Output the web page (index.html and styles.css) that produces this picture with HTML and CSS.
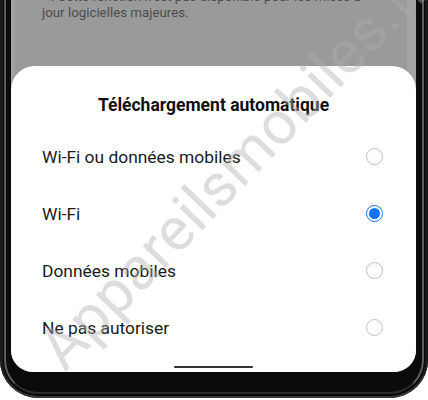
FILE: index.html
```html
<!DOCTYPE html>
<html lang="fr">
<head>
<meta charset="utf-8">
<link rel="stylesheet" href="styles.css">
</head>
<body>
<div class="phone">
  <div class="frame">
    <div class="screen">
      <div class="note">
        <p>* : Cette fonction n'est pas disponible pour les mises à</p>
        <p>jour logicielles majeures.</p>
      </div>
      <div class="sheet">
        <h1 class="title">Téléchargement automatique</h1>
        <ul class="options">
          <li class="option"><span>Wi-Fi ou données mobiles</span><span class="radio"></span></li>
          <li class="option"><span>Wi-Fi</span><span class="radio checked"></span></li>
          <li class="option"><span>Données mobiles</span><span class="radio"></span></li>
          <li class="option"><span>Ne pas autoriser</span><span class="radio"></span></li>
        </ul>
        <div class="home-bar"></div>
      </div>
    </div>
  </div>
  <div class="watermark">Appareilsmobiles.fr</div>
</div>
</body>
</html>
```

FILE: styles.css
```css
html, body {
  margin: 0;
  padding: 0;
  background: #ffffff;
}

body {
  width: 428px;
  height: 400px;
  overflow: hidden;
  font-family: Roboto, "Noto Sans", sans-serif;
}

.phone {
  position: relative;
  width: 428px;
  height: 398px;
  background: #050505;
  border-radius: 0 0 38px 38px;
  box-shadow: inset 0 -2px 0 #3a3a3a, inset 3px 0 0 #1a1a1a, inset -3px 0 0 #1a1a1a;
  overflow: hidden;
}

.frame {
  height: 392px;
  margin: 0 4px;
  border-left: 2px solid #5d5d5d;
  border-right: 2px solid #5d5d5d;
  border-bottom: 2px solid #2c2c2c;
  border-radius: 0 0 34px 34px;
  background: #0b0b0b;
  display: flex;
  justify-content: flex-start;
  padding-left: 5px;
}

.screen {
  width: 405px;
  height: 372px;
  background: #9a9a9a;
  border-radius: 0 0 22px 22px;
  overflow: hidden;
  display: flex;
  flex-direction: column;
  box-shadow: inset 4px 0 0 #a2a2a2, inset -9px 0 0 #a4a4a4;
}

.note {
  padding-left: 31px;
  margin-top: -11px;
  color: #4d4d4d;
  font-size: 13.3px;
  line-height: 16px;
  height: 77px;
}

.note p {
  margin: 0;
  white-space: nowrap;
}

.sheet {
  flex: 1;
  background: #ffffff;
  border-radius: 24px 24px 0 0;
  display: flex;
  flex-direction: column;
  align-items: stretch;
}

.title {
  margin: 0;
  height: 62px;
  padding-top: 28px;
  box-sizing: border-box;
  text-align: center;
  font-size: 17.5px;
  font-weight: 700;
  color: #111111;
  line-height: 22px;
}

.options {
  list-style: none;
  margin: 0;
  padding: 0;
}

.option {
  height: 57px;
  display: flex;
  align-items: center;
  justify-content: space-between;
  padding: 0 33px 0 31px;
  font-size: 17.4px;
  color: #1a1a1a;
}

.radio {
  width: 17px;
  height: 17px;
  box-sizing: border-box;
  border: 1.3px solid #bdbdbd;
  border-radius: 50%;
  display: flex;
  align-items: center;
  justify-content: center;
}

.radio.checked {
  border: 1.6px solid #1673f0;
}

.radio.checked::after {
  content: "";
  width: 11px;
  height: 11px;
  border-radius: 50%;
  background: #1673f0;
}

.home-bar {
  width: 79px;
  height: 2px;
  background: #333333;
  border-radius: 1px;
  margin: 10px auto 0;
}

.watermark {
  position: absolute;
  left: 234px;
  top: 168px;
  transform: translate(-50%, -50%) rotate(-46deg);
  font-size: 60px;
  font-family: Roboto, "Noto Sans", sans-serif;
  color: rgba(175, 175, 175, 0.42);
  white-space: nowrap;
  pointer-events: none;
  letter-spacing: 0.5px;
}
```
